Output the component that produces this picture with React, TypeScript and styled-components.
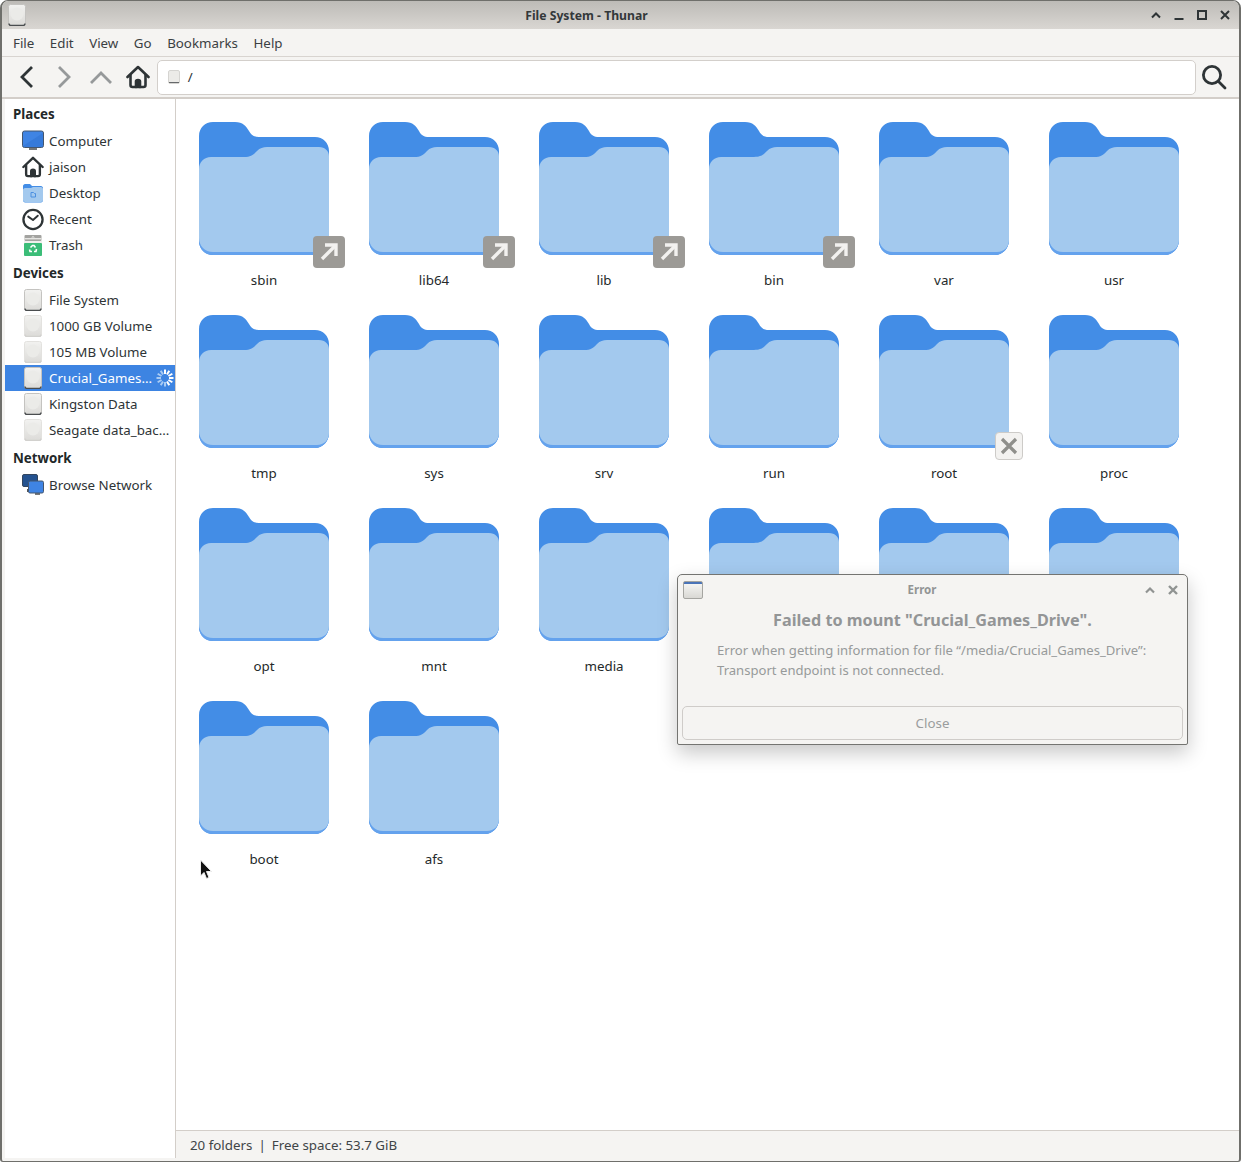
import styled, { createGlobalStyle } from "styled-components";

const GlobalStyle = createGlobalStyle`
  html, body {
    margin: 0;
    padding: 0;
    background: #ffffff;
  }
  * {
    box-sizing: border-box;
  }
`;

const Page = styled.div`
  position: relative;
  width: 1241px;
  height: 1163px;
  overflow: hidden;
  font-family: "Noto Sans", sans-serif;
  font-size: 13.33px;
  color: #2e3436;
`;

const Window = styled.div`
  display: flex;
  flex-direction: column;
  width: 1241px;
  height: 1162px;
  background: #f5f4f2;
  border: 1px solid #6f6f6b;
  border-left-width: 2px;
  border-right-width: 2px;
  border-radius: 8px 8px 3px 3px;
  overflow: hidden;
`;

const TitleBar = styled.div`
  display: flex;
  align-items: center;
  flex: 0 0 28px;
  padding: 0 3px 0 6px;
  background: linear-gradient(#bdbbb7, #d9d6d2);
`;

const TitleText = styled.div`
  flex: 1;
  padding-left: 3px;
  text-align: center;
  font-size: 12.2px;
  font-weight: 700;
  color: #33383a;
`;

const WindowButtons = styled.div`
  display: flex;
  align-items: center;
`;

const WinButton = styled.span`
  display: flex;
  width: 23px;
  height: 16px;
  align-items: center;
  justify-content: center;
  color: #2e3436;
`;

const MenuBar = styled.div`
  display: flex;
  align-items: center;
  gap: 15.5px;
  flex: 0 0 28px;
  padding: 0 11px;
  border-bottom: 1px solid #d8d4d0;
  color: #3b4042;
`;

const ToolBar = styled.div`
  display: flex;
  align-items: center;
  flex: 0 0 42px;
  padding-left: 8px;
  border-bottom: 2px solid #d3cec9;
`;

const ToolButton = styled.span<{ $off?: boolean }>`
  display: flex;
  flex: 0 0 36.7px;
  justify-content: center;
  color: ${(p) => (p.$off ? "#96999a" : "#2e3436")};
`;

const LocationEntry = styled.div`
  display: flex;
  align-items: center;
  gap: 8px;
  flex: 1;
  height: 35px;
  padding-left: 10px;
  background: #ffffff;
  border: 1px solid #d3cfcb;
  border-radius: 5px;
  color: #2e3436;
`;

const SearchButton = styled.span`
  display: flex;
  flex: 0 0 43px;
  justify-content: center;
  padding-right: 7px;
  color: #2e3436;
`;

const Main = styled.div`
  display: flex;
  flex: 1;
  min-height: 0;
  padding-bottom: 3px;
`;

const Sidebar = styled.nav`
  flex: 0 0 171px;
  margin-left: 3px;
  padding-top: 1px;
  background: #ffffff;
  border-right: 1px solid #d3cec9;
`;

const SectionTitle = styled.div<{ $gap: number }>`
  display: flex;
  align-items: center;
  height: 28px;
  margin-top: ${(p) => p.$gap}px;
  padding-left: 8px;
  font-weight: 700;
  color: #222829;
`;

const SideRow = styled.div<{ $selected?: boolean }>`
  display: flex;
  align-items: center;
  height: 26px;
  padding-left: 17px;
  background: ${(p) => (p.$selected ? "#3d84e2" : "transparent")};
  color: ${(p) => (p.$selected ? "#ffffff" : "#2e3436")};
`;

const SideIcon = styled.span`
  display: flex;
  flex: 0 0 22px;
  min-width: 0;
  height: 24px;
  align-items: center;
  justify-content: center;
`;

const SideLabel = styled.span`
  flex: 1;
  margin-left: 5px;
  white-space: nowrap;
`;

const Spinner = styled.span`
  display: flex;
  margin-right: 1px;
`;

const Content = styled.div`
  display: flex;
  flex-direction: column;
  flex: 1;
  min-width: 0;
`;

const FolderGrid = styled.div`
  flex: 1;
  display: grid;
  grid-template-columns: repeat(6, 170px);
  grid-auto-rows: 193px;
  align-content: start;
  padding: 23px 0 0 3px;
  background: #ffffff;
`;

const FolderCell = styled.div`
  display: flex;
  flex-direction: column;
  align-items: center;
`;

const FolderIcon = styled.div`
  position: relative;
  width: 130px;
  height: 133px;
`;

const FolderName = styled.div`
  margin-top: 16px;
  line-height: 18px;
  color: #24292a;
`;

const LinkBadge = styled.span`
  position: absolute;
  right: -16px;
  bottom: -13px;
  display: flex;
  width: 32px;
  height: 32px;
  align-items: center;
  justify-content: center;
  background: #9c9a96;
  border-radius: 4px;
`;

const LockedBadge = styled.span`
  position: absolute;
  right: -14px;
  bottom: -12px;
  display: flex;
  width: 28px;
  height: 28px;
  align-items: center;
  justify-content: center;
  background: #f3f2f0;
  border: 1px solid #cdcbc8;
  border-radius: 4px;
`;

const StatusBar = styled.div`
  display: flex;
  align-items: center;
  gap: 6px;
  flex: 0 0 28px;
  padding-left: 14px;
  border-top: 1px solid #d3cec9;
  color: #3f4547;
`;

const Dialog = styled.div`
  position: absolute;
  left: 677px;
  top: 574px;
  display: flex;
  flex-direction: column;
  width: 511px;
  height: 171px;
  background: #f5f4f2;
  border: 1px solid #747471;
  border-radius: 5px 5px 2px 2px;
  box-shadow: 0 8px 20px rgba(0, 0, 0, 0.22);
`;

const DialogTitleBar = styled.div`
  display: flex;
  align-items: center;
  flex: 0 0 29px;
  padding: 0 3px 0 5px;
`;

const DialogAppIcon = styled.span`
  display: block;
  width: 20px;
  height: 18px;
  background: linear-gradient(#4a74b8 0 2px, #f4f4f2 2px, #d9d8d4);
  border: 1px solid #a5a5a1;
  border-radius: 2px;
`;

const DialogTitle = styled.div`
  flex: 1;
  padding-left: 3px;
  text-align: center;
  font-size: 11.5px;
  font-weight: 700;
  color: #929595;
`;

const DialogButton = styled.span`
  display: flex;
  width: 23px;
  justify-content: center;
  color: #909392;
`;

const DialogHeading = styled.div`
  margin-top: 5px;
  text-align: center;
  font-size: 16.2px;
  line-height: 22px;
  font-weight: 700;
  color: #939596;
`;

const DialogBody = styled.div`
  margin-top: 10px;
  padding-left: 39px;
  font-size: 13.1px;
  line-height: 19.5px;
  color: #979a9a;
  white-space: nowrap;
`;

const DialogClose = styled.div`
  display: flex;
  align-items: center;
  justify-content: center;
  height: 34px;
  margin: auto 4px 4px;
  border: 1px solid #cfccc9;
  border-radius: 5px;
  color: #9a9d9d;
`;

const CursorMark = styled.svg`
  position: absolute;
  left: 199px;
  top: 859px;
`;

function Folder() {
  return (
    <svg width="130" height="133" viewBox="0 0 130 133">
      <path
        d="M14 0H36C44 0 47 4 50 9C52 13 55 15 60 15H116C124 15 130 21 130 29V118C130 126 124 133 116 133H14C6 133 0 127 0 119V14C0 6 6 0 14 0Z"
        fill="#438de6"
      />
      <path d="M0 110H130V118C130 126 124 133 116 133H14C6 133 0 127 0 119Z" fill="#64a2ed" />
      <path
        d="M12 35H45C52 35 54 33 58 29C61 26 64 25 68 25H120C126 25 130 29 130 34V118C130 125 125 130 118 130H14C6 130 0 124 0 116V47C0 40 5 35 12 35Z"
        fill="#a3c9ee"
      />
    </svg>
  );
}

function Drive({ mounted }: { mounted?: boolean }) {
  return (
    <svg width="18" height="22" viewBox="0 0 18 22">
      <defs>
        <linearGradient id="driveFill" x1="0" y1="0" x2="0" y2="1">
          <stop offset="0" stopColor="#f2f2f0" />
          <stop offset="1" stopColor="#dcdbd8" />
        </linearGradient>
      </defs>
      <rect x="0.5" y="0.5" width="17" height="21" rx="2" fill="url(#driveFill)" stroke={mounted ? "#c4c3c0" : "#e3e2df"} />
      <circle cx="9" cy="10" r="6.5" fill="#ebebe8" />
      <path
        d="M1 19.5C1 20.6 1.9 21.5 3 21.5H15C16.1 21.5 17 20.6 17 19.5"
        fill="none"
        stroke={mounted ? "#4a4d4f" : "#d2d1ce"}
        strokeWidth="1.4"
      />
    </svg>
  );
}

function Computer() {
  return (
    <svg width="22" height="22" viewBox="0 0 22 22">
      <rect x="7" y="16" width="8" height="4" fill="#77797a" />
      <rect x="0.5" y="1" width="21" height="16.5" rx="2" fill="#3f84e4" stroke="#44566e" />
      <path d="M1 16L21 3V15.5C21 16.5 20.5 17 19.5 17H2Z" fill="#2d6fd0" opacity="0.5" />
    </svg>
  );
}

function HomeIcon({ size }: { size: number }) {
  return (
    <svg width={size} height={size} viewBox="0 0 24 24" fill="none" stroke="#2e3436" strokeWidth="2.6" strokeLinejoin="round" strokeLinecap="round">
      <path d="M1.5 12L12 2L22.5 12" />
      <path d="M4.5 10V20C4.5 21.2 5.3 22 6.5 22H17.5C18.7 22 19.5 21.2 19.5 20V10" />
      <path d="M10 22V16.5C10 15.5 10.8 15 12 15C13.2 15 14 15.5 14 16.5V22" fill="#2e3436" />
    </svg>
  );
}

function DesktopFolder() {
  return (
    <svg width="20" height="20" viewBox="0 0 20 20">
      <path d="M2 1H7L9 3H18C19 3 20 4 20 5V17C20 18.5 19 19.5 18 19.5H2C1 19.5 0 18.5 0 17V3C0 2 1 1 2 1Z" fill="#438de6" />
      <path d="M2 5H8L10 4H18C19 4 20 5 20 6V17C20 18.2 19 19 18 19H2C1 19 0 18.2 0 17V7C0 6 1 5 2 5Z" fill="#a3c9ee" />
      <path d="M8 9.5H10.5L11.5 10.5H12.5V14H8Z" fill="none" stroke="#4b8fe0" strokeWidth="1" />
    </svg>
  );
}

function Clock() {
  return (
    <svg width="23" height="23" viewBox="0 0 23 23" fill="none" stroke="#2e3436">
      <circle cx="11.5" cy="11.5" r="10" strokeWidth="2.4" />
      <path d="M6.5 8.5L11.5 12L16.5 7.5" strokeWidth="2" strokeLinecap="round" strokeLinejoin="round" />
    </svg>
  );
}

function Trash() {
  return (
    <svg width="18" height="21" viewBox="0 0 18 21">
      <rect x="0.5" y="0" width="17" height="6" rx="1" fill="#a3a3a0" />
      <rect x="0.5" y="3" width="17" height="1.4" fill="#e5e5e2" />
      <path d="M7 2.5L9 1L11 2.5" fill="#e5e5e2" />
      <rect x="0" y="6" width="18" height="15" fill="#f0efec" />
      <rect x="0" y="8" width="18" height="13" rx="1" fill="#3bbd78" />
      <g fill="none" stroke="#ffffff" strokeWidth="1.6">
        <path d="M6.5 12.5L8.5 10.5H10L11.5 12.5" />
        <path d="M12.5 14L12 16.5H10" />
        <path d="M8 16.5H6L5.5 14.5" />
      </g>
    </svg>
  );
}

function NetworkIcon() {
  return (
    <svg width="22" height="22" viewBox="0 0 22 22">
      <rect x="0.5" y="0.5" width="15" height="12" rx="1.5" fill="#24528f" stroke="#33465f" />
      <rect x="5" y="15" width="5" height="3" fill="#555" />
      <rect x="13" y="18" width="5" height="3" fill="#77797a" />
      <rect x="6.5" y="7" width="15" height="12" rx="1.5" fill="#3f84e4" stroke="#44566e" />
    </svg>
  );
}

function BusySpinner() {
  const spokes = Array.from({ length: 12 }, (_, i) => i);
  return (
    <svg width="18" height="18" viewBox="-9 -9 18 18">
      {spokes.map((i) => (
        <rect
          key={i}
          x="-1"
          y="-8.5"
          width="2"
          height="4.5"
          fill={i > 5 && i < 12 ? "#a9cbf3" : "#ffffff"}
          transform={`rotate(${i * 30})`}
        />
      ))}
    </svg>
  );
}

const places = [
  { name: "Computer", icon: <Computer /> },
  { name: "jaison", icon: <HomeIcon size={24} /> },
  { name: "Desktop", icon: <DesktopFolder /> },
  { name: "Recent", icon: <Clock /> },
  { name: "Trash", icon: <Trash /> },
];

const devices = [
  { name: "File System", mounted: true },
  { name: "1000 GB Volume" },
  { name: "105 MB Volume" },
  { name: "Crucial_Games...", mounted: true, selected: true },
  { name: "Kingston Data", mounted: true },
  { name: "Seagate data_bac..." },
];

// the three folders behind the error dialog have no readable name in the shot
const folders = [
  { name: "sbin", link: true },
  { name: "lib64", link: true },
  { name: "lib", link: true },
  { name: "bin", link: true },
  { name: "var" },
  { name: "usr" },
  { name: "tmp" },
  { name: "sys" },
  { name: "srv" },
  { name: "run" },
  { name: "root", locked: true },
  { name: "proc" },
  { name: "opt" },
  { name: "mnt" },
  { name: "media" },
  { name: "" },
  { name: "" },
  { name: "" },
  { name: "boot" },
  { name: "afs" },
];

export default function App() {
  return (
    <Page>
      <GlobalStyle />
      <Window>
        <TitleBar>
          <Drive mounted />
          <TitleText>File System - Thunar</TitleText>
          <WindowButtons>
            <WinButton>
              <svg width="12" height="12" viewBox="0 0 12 12" fill="none" stroke="currentColor" strokeWidth="2">
                <path d="M2 8.5L6 4.5L10 8.5" />
              </svg>
            </WinButton>
            <WinButton>
              <svg width="12" height="12" viewBox="0 0 12 12" fill="currentColor">
                <rect x="1.5" y="9" width="9" height="2" />
              </svg>
            </WinButton>
            <WinButton>
              <svg width="12" height="12" viewBox="0 0 12 12" fill="none" stroke="currentColor" strokeWidth="2">
                <rect x="2" y="2" width="8" height="8" />
              </svg>
            </WinButton>
            <WinButton>
              <svg width="12" height="12" viewBox="0 0 12 12" fill="none" stroke="currentColor" strokeWidth="2">
                <path d="M2 2L10 10M10 2L2 10" />
              </svg>
            </WinButton>
          </WindowButtons>
        </TitleBar>
        <MenuBar>
          <span>File</span>
          <span>Edit</span>
          <span>View</span>
          <span>Go</span>
          <span>Bookmarks</span>
          <span>Help</span>
        </MenuBar>
        <ToolBar>
          <ToolButton>
            <svg width="24" height="24" viewBox="0 0 24 24" fill="none" stroke="currentColor" strokeWidth="2.8">
              <path d="M16 2L6 12L16 22" />
            </svg>
          </ToolButton>
          <ToolButton $off>
            <svg width="24" height="24" viewBox="0 0 24 24" fill="none" stroke="currentColor" strokeWidth="2.8">
              <path d="M6 2L16 12L6 22" />
            </svg>
          </ToolButton>
          <ToolButton $off>
            <svg width="24" height="24" viewBox="0 0 24 24" fill="none" stroke="currentColor" strokeWidth="2.8">
              <path d="M1 18L11 8L21 18" />
            </svg>
          </ToolButton>
          <ToolButton>
            <HomeIcon size={24} />
          </ToolButton>
          <LocationEntry>
            <svg width="12" height="14" viewBox="0 0 12 14">
              <rect x="0.5" y="0.5" width="11" height="13" rx="1.5" fill="#ecebe8" stroke="#d5d4d1" />
              <path d="M1 12.5H11" stroke="#66696b" strokeWidth="1" />
            </svg>
            <span>/</span>
          </LocationEntry>
          <SearchButton>
            <svg width="26" height="26" viewBox="0 0 26 26" fill="none" stroke="currentColor" strokeWidth="2.8" strokeLinecap="round">
              <circle cx="11" cy="11" r="8.6" />
              <path d="M17.5 17.5L24 24" />
            </svg>
          </SearchButton>
        </ToolBar>
        <Main>
          <Sidebar>
            <SectionTitle $gap={0}>Places</SectionTitle>
            {places.map((p) => (
              <SideRow key={p.name}>
                <SideIcon>{p.icon}</SideIcon>
                <SideLabel>{p.name}</SideLabel>
              </SideRow>
            ))}
            <SectionTitle $gap={1}>Devices</SectionTitle>
            {devices.map((d) => (
              <SideRow key={d.name} $selected={d.selected}>
                <SideIcon>
                  <Drive mounted={d.mounted} />
                </SideIcon>
                <SideLabel>{d.name}</SideLabel>
                {d.selected && (
                  <Spinner>
                    <BusySpinner />
                  </Spinner>
                )}
              </SideRow>
            ))}
            <SectionTitle $gap={1}>Network</SectionTitle>
            <SideRow>
              <SideIcon>
                <NetworkIcon />
              </SideIcon>
              <SideLabel>Browse Network</SideLabel>
            </SideRow>
          </Sidebar>
          <Content>
            <FolderGrid>
              {folders.map((f, i) => (
                <FolderCell key={i}>
                  <FolderIcon>
                    <Folder />
                    {f.link && (
                      <LinkBadge>
                        <svg width="22" height="22" viewBox="0 0 22 22" fill="none" stroke="#f2f1ef" strokeWidth="3.4">
                          <path d="M4 18L17 5" />
                          <path d="M7 4H18V15" />
                        </svg>
                      </LinkBadge>
                    )}
                    {f.locked && (
                      <LockedBadge>
                        <svg width="18" height="18" viewBox="0 0 18 18" fill="none" stroke="#8f8f8b" strokeWidth="3.2">
                          <path d="M2 2L16 16M16 2L2 16" />
                        </svg>
                      </LockedBadge>
                    )}
                  </FolderIcon>
                  {f.name && <FolderName>{f.name}</FolderName>}
                </FolderCell>
              ))}
            </FolderGrid>
            <StatusBar>
              <span>20 folders</span>
              <span>|</span>
              <span>Free space: 53.7 GiB</span>
            </StatusBar>
          </Content>
        </Main>
      </Window>
      <Dialog>
        <DialogTitleBar>
          <DialogAppIcon />
          <DialogTitle>Error</DialogTitle>
          <DialogButton>
            <svg width="12" height="12" viewBox="0 0 12 12" fill="none" stroke="currentColor" strokeWidth="2.2">
              <path d="M2 8.5L6 4.5L10 8.5" />
            </svg>
          </DialogButton>
          <DialogButton>
            <svg width="12" height="12" viewBox="0 0 12 12" fill="none" stroke="currentColor" strokeWidth="2.4">
              <path d="M2 2L10 10M10 2L2 10" />
            </svg>
          </DialogButton>
        </DialogTitleBar>
        <DialogHeading>Failed to mount "Crucial_Games_Drive".</DialogHeading>
        <DialogBody>
          Error when getting information for file “/media/Crucial_Games_Drive”:
          <br />
          Transport endpoint is not connected.
        </DialogBody>
        <DialogClose>Close</DialogClose>
      </Dialog>
      <CursorMark width="14" height="22" viewBox="0 0 14 22">
        <path d="M1.5 1V17L5 13.5L7.5 19.5L10 18.5L7.5 12.5H12.5Z" fill="#111" stroke="#eee" strokeWidth="1" />
      </CursorMark>
    </Page>
  );
}
